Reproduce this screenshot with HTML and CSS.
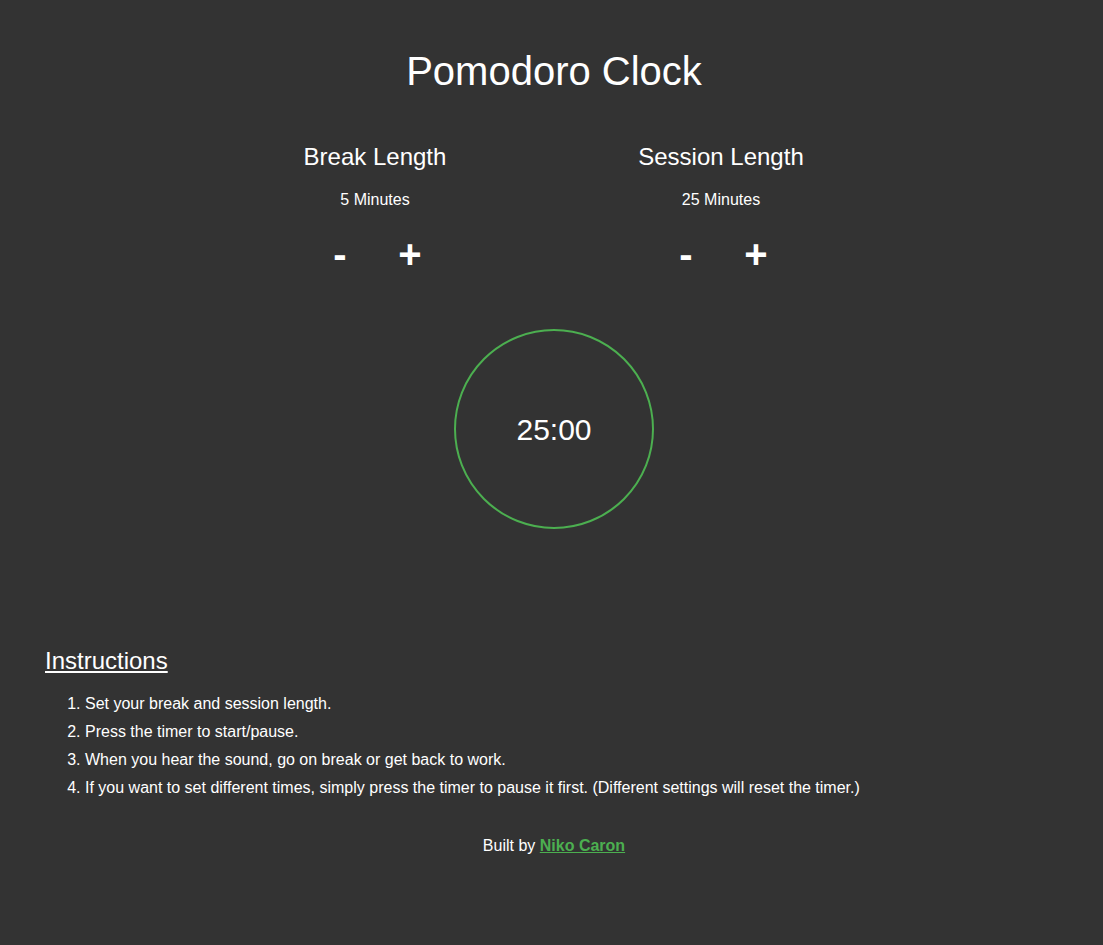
FILE: index.html
```html
<!DOCTYPE html>
<html lang="en">
<head>
<meta charset="utf-8">
<title>Pomodoro Clock</title>
<link rel="stylesheet" href="styles.css">
</head>
<body>
<main class="app">
  <h1 class="title">Pomodoro Clock</h1>
  <section class="settings">
    <div class="setting">
      <h2 class="setting-label">Break Length</h2>
      <p class="setting-value">5 Minutes</p>
      <div class="controls">
        <button class="ctrl" type="button">-</button>
        <button class="ctrl" type="button">+</button>
      </div>
    </div>
    <div class="setting">
      <h2 class="setting-label">Session Length</h2>
      <p class="setting-value">25 Minutes</p>
      <div class="controls">
        <button class="ctrl" type="button">-</button>
        <button class="ctrl" type="button">+</button>
      </div>
    </div>
  </section>
  <div class="timer-wrap">
    <div class="timer">25:00</div>
  </div>
  <section class="instructions">
    <h3 class="instructions-title">Instructions</h3>
    <ol class="steps">
      <li>Set your break and session length.</li>
      <li>Press the timer to start/pause.</li>
      <li>When you hear the sound, go on break or get back to work.</li>
      <li>If you want to set different times, simply press the timer to pause it first. (Different settings will reset the timer.)</li>
    </ol>
  </section>
  <footer class="footer">Built by <a class="author" href="#">Niko Caron</a></footer>
</main>
</body>
</html>
```

FILE: styles.css
```css
html, body {
  margin: 0;
  padding: 0;
  background: #333333;
}

body {
  color: #ffffff;
  font-family: "Liberation Sans", Arial, sans-serif;
  min-height: 945px;
}

.app {
  padding-left: 5px;
}

.title {
  margin: 48px 0 0;
  font-size: 40px;
  line-height: 46px;
  font-weight: normal;
  text-align: center;
}

.settings {
  display: flex;
  justify-content: center;
  margin-top: 49px;
  padding-right: 12px;
}

.setting {
  width: 346px;
  display: flex;
  flex-direction: column;
  align-items: center;
}

.setting-label {
  margin: 0;
  font-size: 24px;
  line-height: 28px;
  font-weight: normal;
}

.setting-value {
  margin: 20px 0 0;
  font-size: 16px;
  line-height: 18px;
}

.controls {
  display: flex;
  margin-top: 22px;
}

.ctrl {
  width: 70px;
  padding: 0;
  border: 0;
  background: none;
  color: #ffffff;
  font-family: "Liberation Sans", Arial, sans-serif;
  font-size: 40px;
  line-height: 46px;
  font-weight: bold;
  cursor: pointer;
}

.timer-wrap {
  display: flex;
  justify-content: center;
  margin-top: 52px;
}

.timer {
  width: 196px;
  height: 194px;
  padding-top: 2px;
  border: 2px solid #4caf50;
  border-radius: 50%;
  display: flex;
  align-items: center;
  justify-content: center;
  font-size: 30px;
}

.instructions {
  margin-top: 118px;
  padding-left: 40px;
}

.instructions-title {
  margin: 0;
  font-size: 24px;
  line-height: 28px;
  font-weight: normal;
  text-decoration: underline;
}

.steps {
  margin: 15px 0 0;
  padding-left: 40px;
  font-size: 16px;
  line-height: 28px;
}

.footer {
  margin-top: 35px;
  text-align: center;
  font-size: 16px;
  line-height: 18px;
}

.author {
  color: #4caf50;
  font-weight: bold;
}
```
